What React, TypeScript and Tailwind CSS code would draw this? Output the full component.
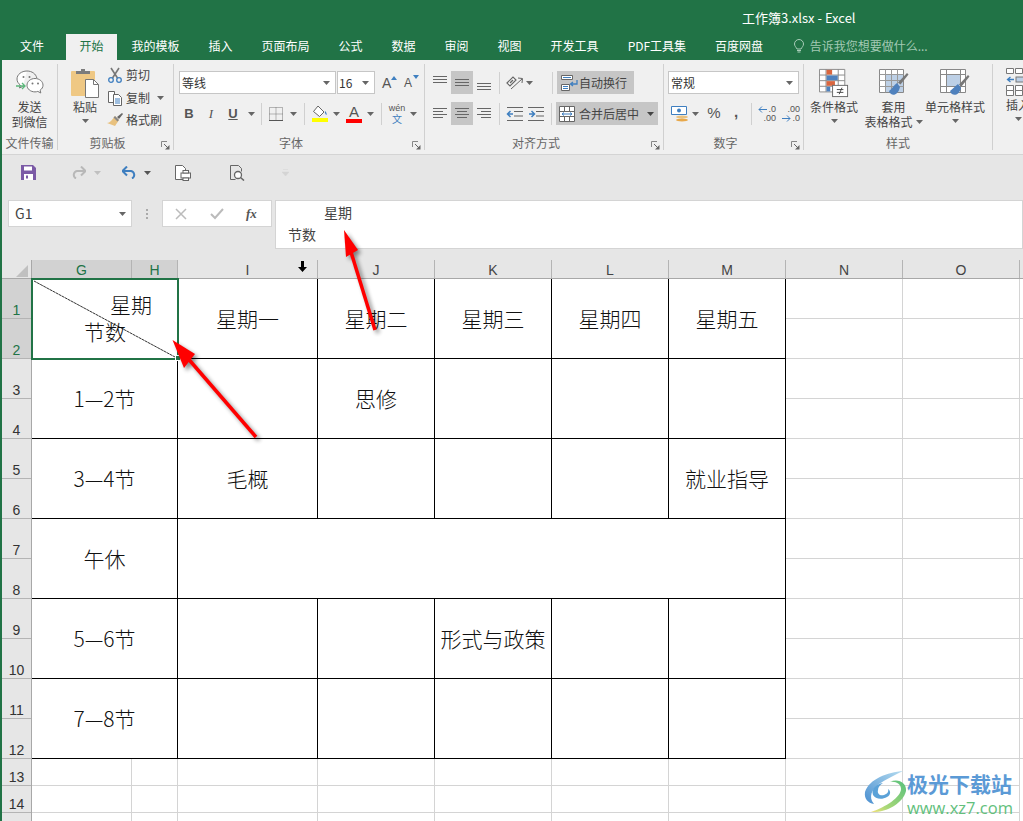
import React from "react";

const Caret = ({ c = "#666" }: { c?: string }) => (
  <svg width="7" height="4" viewBox="0 0 7 4" className="shrink-0"><path d="M0 0h7L3.5 4z" fill={c} /></svg>
);

const Sep = ({ cls }: { cls: string }) => <div className={"w-px h-[22px] bg-[#d0d0d0] shrink-0 " + cls} />;

function Lines({ ys, align }: { ys: number[]; align: "l" | "c" | "r" | "f" }) {
  const rows = ys.map((y, i) => {
    const short = i % 2 === 1 && align !== "f";
    const w = short ? 10 : 14;
    const x = align === "l" ? 1 : align === "r" ? 15 - w : 8 - w / 2;
    return <rect key={i} x={x} y={y} width={w} height="1" fill="#666" />;
  });
  return <svg width="16" height="16" viewBox="0 0 16 16">{rows}</svg>;
}

const AlignCell = ({ ys, align, on }: { ys: number[]; align: "l" | "c" | "r" | "f"; on?: boolean }) => (
  <div className={"w-[22px] h-[23px] flex items-center justify-center " + (on ? "bg-[#c6c6c6]" : "")}>
    <Lines ys={ys} align={align} />
  </div>
);

const Launcher = () => (
  <svg width="9" height="9" viewBox="0 0 9 9" className="absolute right-[3px] bottom-[0px]">
    <path d="M0.5 6V0.5H6" fill="none" stroke="#888" />
    <path d="M3 3l4 4" stroke="#666" />
    <path d="M8.5 4v4.5H4z" fill="#666" />
  </svg>
);

function Group({ w, label, launcher, children }: { w: string; label: string; launcher?: boolean; children: React.ReactNode }) {
  return (
    <div className={"relative flex flex-col h-[86px] mt-[4px] border-r border-[#d0d0d0] shrink-0 " + w}>
      <div className="h-[71px] flex">{children}</div>
      <div className={"h-[15px] text-[12px] leading-[16px] text-center text-[#666] " + (launcher ? "pr-[16px]" : "")}>{label}</div>
      {launcher && <Launcher />}
    </div>
  );
}

const WeChat = () => (
  <svg width="30" height="28" viewBox="0 0 30 28">
    <path d="M12 2C6.500 2 2 5.500 2 10c0 2.500 1.300 4.500 3.300 6L4.500 19l3.200-1.500" fill="#fff" stroke="#777" />
    <path d="M12 2c5 0 9 3 9.800 7" fill="none" stroke="#777" />
    <circle cx="8.500" cy="8" r="1" fill="#777" /><circle cx="14.500" cy="8" r="1" fill="#777" />
    <path d="M20 9.500c-4.500 0-8 3-8 6.700s3.500 6.700 8 6.700c1 0 2-.2 2.800-.5l3 1.600-.7-2.800c1.800-1.200 2.900-3 2.900-5 0-3.700-3.500-6.700-8-6.700z" fill="#fff" stroke="#777" />
    <circle cx="17.500" cy="14.500" r="1" fill="#777" /><circle cx="23" cy="14.500" r="1" fill="#777" />
    <path d="M1 17h9M7 14l3 3-3 3" fill="none" stroke="#5bb77a" strokeWidth="1.300" />
  </svg>
);

const Paste = () => (
  <svg width="30" height="30" viewBox="0 0 30 30">
    <rect x="1" y="3" width="24" height="25" rx="1" fill="#efc884" />
    <path d="M6 6V3h5V1h4v2h5v3z" fill="#7c7c7c" />
    <path d="M15.500 11.500h8l5 5v13h-13z" fill="#fff" stroke="#777" />
    <path d="M23.500 11.500v5h5" fill="none" stroke="#777" />
  </svg>
);

const Scissors = () => (
  <svg width="16" height="16" viewBox="0 0 16 16">
    <path d="M4 1l6.500 10M12 1L5.500 11" stroke="#777" strokeWidth="1.600" />
    <circle cx="4" cy="13" r="2.300" fill="none" stroke="#3f7fc0" strokeWidth="1.300" />
    <circle cx="12" cy="13" r="2.300" fill="none" stroke="#3f7fc0" strokeWidth="1.300" />
  </svg>
);

const CopyIcon = () => (
  <svg width="16" height="16" viewBox="0 0 16 16">
    <path d="M1.500 1.500h6v11h-6z" fill="#fff" stroke="#666" />
    <path d="M6.500 4.500h5l3 3v8h-8z" fill="#fff" stroke="#666" />
    <path d="M8 9h5M8 11h5M8 13h5" stroke="#3f7fc0" />
  </svg>
);

const Brush = () => (
  <svg width="18" height="16" viewBox="0 0 18 16">
    <path d="M11 5l2 2 4-5-1-1z" fill="#666" />
    <path d="M9 4l4 4-4 6-8-3c3 0 5-3 8-7z" fill="#e8c17f" />
    <path d="M9 4l4 4-1.500 1.500L7.500 5.500z" fill="#888" />
  </svg>
);

const FillIcon = () => (
  <svg width="18" height="18" viewBox="0 0 18 18">
    <path d="M7 1l6 6-4.500 4.500-6-5z" fill="#fff" stroke="#666" />
    <path d="M14 6c1.500 1.500 2 3 1.500 4-1-.5-2-2-1.500-4z" fill="#3f7fc0" />
    <rect x="1" y="13" width="16" height="4" fill="#ffff00" />
  </svg>
);

const BorderIcon = () => (
  <svg width="14" height="14" viewBox="0 0 14 14">
    <path d="M.5.500h13v13H.5zM7 .5v13M.5 7h13" fill="none" stroke="#777" strokeDasharray="1 1" />
    <path d="M0 13.500h14" stroke="#555" />
  </svg>
);

const WrapIcon = () => (
  <svg width="18" height="18" viewBox="0 0 18 18">
    <path d="M1.500 1.500h11v4h-11zM1.500 10.500h8v6h-8z" fill="#fff" stroke="#666" />
    <path d="M3 3.500h8M3 12.500h5M3 14.500h5" stroke="#3f7fc0" />
    <path d="M17 6v4h-6M13 8l-2.500 2 2.500 2" fill="none" stroke="#3f7fc0" strokeWidth="1.300" />
  </svg>
);

const MergeIcon = () => (
  <svg width="16" height="16" viewBox="0 0 16 16">
    <path d="M.5.500h15v15H.5zM.5 5.500h15M.5 10.500h15M5.500.5v5M10.500.5v5M5.500 10.500v5M10.500 10.500v5" fill="#fff" stroke="#666" />
    <path d="M3 8h10" stroke="#3f7fc0" />
    <path d="M5 6.500L3 8l2 1.500M11 6.500L13 8l-2 1.500" fill="none" stroke="#3f7fc0" />
  </svg>
);

const Orient = () => (
  <svg width="20" height="18" viewBox="0 0 20 18">
    <path d="M2 9l6-6 3 3-6 6z" fill="#fff" stroke="#666" strokeWidth="1.200" />
    <path d="M5 9l3-3" stroke="#666" strokeWidth="1.500" />
    <path d="M6 15L17 5M13 4l4.500.5L17 9" fill="none" stroke="#666" />
  </svg>
);

const Indent = ({ dir }: { dir: "l" | "r" }) => (
  <svg width="17" height="14" viewBox="0 0 17 14">
    {dir === "l" ? (
      <>
        <path d="M1 .5h16M8 4.500h9M8 9h9M1 13.500h16" stroke="#666" />
        <path d="M7 7H2M4.500 4L1.500 7l3 3" fill="none" stroke="#3f7fc0" strokeWidth="1.500" />
      </>
    ) : (
      <>
        <path d="M0 .5h16M8 4.500h8M8 9h8M0 13.500h16" stroke="#666" />
        <path d="M1 7h5M3.500 4l3 3-3 3" fill="none" stroke="#3f7fc0" strokeWidth="1.500" />
      </>
    )}
  </svg>
);

const Accounting = () => (
  <svg width="18" height="18" viewBox="0 0 18 18">
    <path d="M.5 1.500h15v8H.5z" fill="#fff" stroke="#3f7fc0" />
    <circle cx="8" cy="5.500" r="2" fill="#3f7fc0" />
    <ellipse cx="11" cy="12" rx="6" ry="1.500" fill="#e8c17f" />
    <ellipse cx="11" cy="15" rx="6" ry="1.500" fill="#e8a84a" />
  </svg>
);

const Decimal = ({ inc }: { inc: boolean }) => (
  <div className="relative w-[18px] h-[18px] text-[9px] leading-[9px] text-[#555] text-right font-['Liberation_Sans',sans-serif]">
    <div>{inc ? ".0" : ".00"}</div>
    <div>{inc ? ".00" : ".0"}</div>
    <svg width="9" height="7" viewBox="0 0 9 7" className={"absolute left-0 " + (inc ? "top-[1px]" : "top-[10px]")}>
      {inc ? <path d="M9 3.500H1M4 .5l-3 3 3 3" fill="none" stroke="#3f7fc0" /> : <path d="M0 3.500h8M5 .5l3 3-3 3" fill="none" stroke="#3f7fc0" />}
    </svg>
  </div>
);

const CondFormat = () => (
  <svg width="30" height="30" viewBox="0 0 32 30">
    <path d="M.5.500h27v24H.5zM7.500.5v24M20.500.5v24M.5 6.500h27M.5 12.500h27M.5 18.500h27" fill="#fff" stroke="#888" />
    <rect x="8" y="1" width="6" height="5" fill="#d9663f" />
    <rect x="8" y="7" width="12" height="5" fill="#4f81bd" />
    <rect x="8" y="13" width="9" height="5" fill="#d9663f" />
    <rect x="8" y="19" width="4" height="5" fill="#4f81bd" />
    <rect x="14.500" y="17.500" width="16" height="12" fill="#fff" stroke="#666" />
    <path d="M19 22h7M19 25h7M24.500 20l-3 7" stroke="#444" fill="none" />
  </svg>
);

const TableFmt = () => (
  <svg width="30" height="30" viewBox="0 0 30 30">
    <path d="M.5 1.500h24v23H.5z" fill="#fff" stroke="#888" />
    <rect x="6" y="6" width="18" height="18" fill="#bdd0e6" />
    <path d="M.5 6.500h24M.5 12.500h24M.5 18.500h24M6.500 1.500v23M12.500 1.500v23M18.500 1.500v23" stroke="#999" fill="none" />
    <path d="M28 5l1.500 1.500-8 10-2.500-2z" fill="#777" />
    <path d="M18 15c-3 2-5 6-8 8 2 6 9 5 11-4z" fill="#4f81bd" />
  </svg>
);

const CellStyle = () => (
  <svg width="30" height="30" viewBox="0 0 30 30">
    <path d="M.5 1.500h25v23H.5zM.5 6.500h25M.5 18.500h25M6.500 1.500v23M20.500 1.500v23" fill="#fff" stroke="#888" />
    <rect x="7" y="7" width="13" height="11" fill="#bdd0e6" />
    <path d="M28 7l1.500 1.500-8 10-2.500-2z" fill="#777" />
    <path d="M18 16c-3 2-5 5-8 7 2 6 9 5 11-3z" fill="#4f81bd" />
  </svg>
);

const InsertIcon = () => (
  <svg width="20" height="28" viewBox="0 0 20 28">
    <path d="M.5.500h7v5h-7zM9.500.5h7v5h-7zM.5 17.500h7v5h-7zM9.500 17.500h7v5h-7zM.5 22.500h7v5h-7zM9.500 22.500h7v5h-7z" fill="#fff" stroke="#777" />
    <rect x="10" y="9" width="10" height="5" fill="#bdd0e6" stroke="#777" />
    <path d="M8 11.500H2M4.500 9l-3 2.500 3 2.500" fill="none" stroke="#3f7fc0" strokeWidth="1.300" />
  </svg>
);

function BigButton({ w, icon, lines, caret, inlineCaret }: { w: string; icon: React.ReactNode; lines: string[]; caret?: boolean; inlineCaret?: boolean }) {
  return (
    <div className={"flex flex-col items-center shrink-0 pt-[4px] " + w}>
      <div className="h-[30px] flex items-center justify-center">{icon}</div>
      <div className="mt-[1px] text-[12px] leading-[15px] text-[#444] text-center whitespace-nowrap">
        {lines.map((l, i) => (
          <div key={l} className="flex items-center justify-center gap-[3px]">
            {l}
            {inlineCaret && i === lines.length - 1 && <Caret />}
          </div>
        ))}
      </div>
      {caret && <div className="mt-[5px]"><Caret /></div>}
    </div>
  );
}

function SmallBtn({ icon, text, caret }: { icon: React.ReactNode; text: string; caret?: boolean }) {
  return (
    <div className="h-[22.500px] flex items-center text-[12px] text-[#444] whitespace-nowrap">
      <div className="w-[18px] flex justify-center">{icon}</div>
      <span className="ml-[2px]">{text}</span>
      {caret && <span className="ml-[7px]"><Caret /></span>}
    </div>
  );
}

function Tabs() {
  const tabs = ["我的模板", "插入", "页面布局", "公式", "数据", "审阅", "视图", "开发工具", "PDF工具集", "百度网盘"];
  return (
    <div className="h-[26px] flex items-start text-[12px] text-white bg-[#217346] pl-[6px]">
      <div className="w-[52px] h-[26px] leading-[23px] text-center">文件</div>
      <div className="ml-[8px] w-[51px] h-[26px] leading-[23px] text-center bg-[#f0f0f0] text-[#217346]">开始</div>
      {tabs.map((t) => (
        <div key={t} className="px-[14.500px] h-[26px] leading-[23px] whitespace-nowrap">{t}</div>
      ))}
      <svg width="12" height="14" viewBox="0 0 12 14" className="ml-[15px] mt-[5px]">
        <path d="M4 10C3 8 1.500 7 1.500 5a4.500 4.500 0 0 1 9 0c0 2-1.500 3-2.500 5z" fill="none" stroke="#a9cdb9" />
        <path d="M4 11.500h4M4.500 13h3" stroke="#a9cdb9" />
      </svg>
      <div className="ml-[5px] leading-[23px] text-[#a3c9b4] whitespace-nowrap">告诉我您想要做什么...</div>
    </div>
  );
}

function Ribbon() {
  return (
    <div className="h-[95px] flex bg-[#f0f0f0] border-b border-[#d4d4d4] overflow-hidden">
      <Group w="w-[56px]" label="文件传输">
        <BigButton w="w-[55px]" icon={<WeChat />} lines={["发送", "到微信"]} />
      </Group>
      <Group w="w-[116px]" label="剪贴板" launcher>
        <div className="ml-[6px] w-[42px]">
          <BigButton w="w-[42px]" icon={<Paste />} lines={["粘贴"]} caret />
        </div>
        <div className="flex flex-col">
          <SmallBtn icon={<Scissors />} text="剪切" />
          <SmallBtn icon={<CopyIcon />} text="复制" caret />
          <SmallBtn icon={<Brush />} text="格式刷" />
        </div>
      </Group>
      <Group w="w-[251px]" label="字体" launcher>
        <div className="flex flex-col pt-[7px] pl-[5px]">
          <div className="flex items-center h-[23px]">
            <div className="w-[157px] h-[23px] bg-white border border-[#c6c6c6] flex items-center justify-between pl-[2px] pr-[5px] text-[12px] text-[#333]">
              等线<Caret />
            </div>
            <div className="ml-[1px] w-[38px] h-[23px] bg-white border border-[#c6c6c6] flex items-center justify-between pl-[1px] pr-[5px] text-[12px] text-[#333]">
              16<Caret />
            </div>
            <div className="ml-[7px] w-[16px] text-[14px] text-[#555] relative font-['Liberation_Sans',sans-serif] leading-none">
              A<svg width="6" height="4" viewBox="0 0 6 4" className="absolute top-[0px] left-[9px]"><path d="M0 4h6L3 0z" fill="#3f7fc0" /></svg>
            </div>
            <div className="ml-[6px] w-[16px] text-[12px] text-[#555] relative font-['Liberation_Sans',sans-serif] leading-none">
              A<svg width="6" height="4" viewBox="0 0 6 4" className="absolute top-[-2px] left-[9px]"><path d="M0 0h6L3 4z" fill="#3f7fc0" /></svg>
            </div>
          </div>
          <div className="flex items-center h-[23px] mt-[8px] -ml-[1px] text-[#555] font-['Liberation_Sans',sans-serif]">
            <div className="w-[22px] text-center text-[13px] font-bold">B</div>
            <div className="w-[22px] text-center text-[13px] italic font-['Liberation_Serif',serif]">I</div>
            <div className="w-[22px] text-center text-[13px] font-bold underline">U</div>
            <div className="w-[14px] flex justify-center"><Caret /></div>
            <Sep cls="ml-[3px]" />
            <div className="ml-[6px] w-[16px] flex justify-center"><BorderIcon /></div>
            <div className="w-[18px] flex justify-center"><Caret /></div>
            <Sep cls="ml-[2px]" />
            <div className="ml-[4px] w-[22px] flex justify-center"><FillIcon /></div>
            <div className="w-[10px] flex justify-center"><Caret /></div>
            <div className="ml-[2px] w-[22px] flex flex-col items-center leading-none">
              <span className="text-[15px] font-medium leading-[15px]">A</span>
              <span className="w-[16px] h-[4px] bg-[#ff0000]" />
            </div>
            <div className="w-[10px] flex justify-center"><Caret /></div>
            <Sep cls="ml-[6px]" />
            <div className="ml-[4px] w-[22px] flex flex-col items-center leading-none">
              <span className="text-[9px] leading-[9px] text-[#555]">wén</span>
              <span className="text-[10px] leading-[11px] text-[#3f7fc0] font-['Noto_Sans_CJK_SC',sans-serif]">文</span>
            </div>
            <div className="w-[10px] flex justify-center"><Caret /></div>
          </div>
        </div>
      </Group>
      <Group w="w-[239px]" label="对齐方式" launcher>
        <div className="flex flex-col pt-[7px] pl-[4px]">
          <div className="flex items-center h-[23px]">
            <AlignCell ys={[1, 4, 7]} align="f" />
            <AlignCell ys={[4, 7, 10]} align="f" on />
            <AlignCell ys={[8, 11, 14]} align="f" />
            <Sep cls="ml-[4px]" />
            <div className="ml-[5px] w-[20px]"><Orient /></div>
            <div className="ml-[1px]"><Caret /></div>
            <Sep cls="ml-[19px]" />
            <div className="ml-[4px] w-[77px] h-[23px] bg-[#c6c6c6] flex items-center text-[12px] text-[#444] pl-[3px]">
              <WrapIcon /><span className="ml-[1px] whitespace-nowrap">自动换行</span>
            </div>
          </div>
          <div className="flex items-center h-[23px] mt-[8px]">
            <AlignCell ys={[2, 5, 8, 11]} align="l" />
            <AlignCell ys={[2, 5, 8, 11]} align="c" on />
            <AlignCell ys={[2, 5, 8, 11]} align="r" />
            <Sep cls="ml-[4px]" />
            <div className="ml-[6px]"><Indent dir="l" /></div>
            <div className="ml-[5px]"><Indent dir="r" /></div>
            <Sep cls="ml-[6px]" />
            <div className="ml-[4px] w-[102px] h-[23px] bg-[#c6c6c6] flex items-center text-[12px] text-[#444] pl-[3px]">
              <MergeIcon /><span className="ml-[4px] whitespace-nowrap">合并后居中</span><span className="ml-[8px]"><Caret c="#444" /></span>
            </div>
          </div>
        </div>
      </Group>
      <Group w="w-[140px]" label="数字" launcher>
        <div className="flex flex-col pt-[7px] pl-[4px]">
          <div className="w-[131px] h-[23px] bg-white border border-[#c6c6c6] flex items-center justify-between pl-[2px] pr-[5px] text-[12px] text-[#333]">
            常规<Caret />
          </div>
          <div className="flex items-center h-[23px] mt-[8px] text-[#555]">
            <div className="ml-[3px]"><Accounting /></div>
            <div className="ml-[3px]"><Caret /></div>
            <div className="ml-[5px] w-[20px] text-[15px] text-center font-['Liberation_Sans',sans-serif]">%</div>
            <div className="ml-[3px] w-[18px] text-[15px] font-bold text-center font-['Liberation_Sans',sans-serif] -mt-[3px]">,</div>
            <Sep cls="ml-[6px]" />
            <div className="ml-[6px]"><Decimal inc /></div>
            <div className="ml-[6px]"><Decimal inc={false} /></div>
          </div>
        </div>
      </Group>
      <Group w="w-[189px]" label="样式">
        <BigButton w="w-[60px]" icon={<CondFormat />} lines={["条件格式"]} caret />
        <BigButton w="w-[59px]" icon={<TableFmt />} lines={["套用", "表格格式"]} inlineCaret />
        <BigButton w="w-[64px]" icon={<CellStyle />} lines={["单元格样式"]} caret />
      </Group>
      <div className="h-[86px] mt-[4px] w-[30px] shrink-0 flex flex-col pl-[13px] pt-[4px] text-[12px] text-[#444] whitespace-nowrap">
        <InsertIcon />
        <div className="mt-[1px] leading-[15px]">插入</div>
        <div className="mt-[5px] ml-[9px]"><Caret /></div>
      </div>
    </div>
  );
}

function Toolbar() {
  return (
    <div className="h-[35px] bg-[#e6e6e6] flex items-center pl-[19px]">
      <svg width="15" height="15" viewBox="0 0 15 15">
        <path d="M0 0h12l3 3v12H0z" fill="#7b5aa6" />
        <rect x="3" y="1.500" width="8" height="4" fill="#fff" />
        <rect x="3" y="9" width="9" height="6" fill="#fff" />
        <rect x="5" y="10.500" width="2" height="3" fill="#7b5aa6" />
      </svg>
      <svg width="15" height="13" viewBox="0 0 15 13" className="ml-[35px]">
        <path d="M14 5H6a4 4 0 0 0-1 7.500" fill="none" stroke="#b8b8b8" strokeWidth="2" />
        <path d="M10 .5L14.500 5 10 9.500" fill="none" stroke="#b8b8b8" strokeWidth="2" />
      </svg>
      <div className="ml-[8px]"><Caret c="#c0c0c0" /></div>
      <svg width="15" height="13" viewBox="0 0 15 13" className="ml-[21px]">
        <path d="M1 5h8a4 4 0 0 1 1 7.500" fill="none" stroke="#3f7fc0" strokeWidth="2" />
        <path d="M5 .5L.5 5 5 9.500" fill="none" stroke="#3f7fc0" strokeWidth="2" />
      </svg>
      <div className="ml-[7px]"><Caret c="#555" /></div>
      <svg width="16" height="16" viewBox="0 0 16 16" className="ml-[24px]">
        <path d="M.5.500h7l3 3v11h-10z" fill="#fff" stroke="#666" />
        <rect x="6" y="8" width="9.500" height="5" fill="#fff" stroke="#666" />
        <rect x="8" y="5.500" width="5.500" height="2.500" fill="#fff" stroke="#666" />
        <rect x="8" y="13" width="5.500" height="2.500" fill="#fff" stroke="#666" />
      </svg>
      <svg width="15" height="16" viewBox="0 0 15 16" className="ml-[39px]">
        <path d="M.5.500h8l3 3v3M.5.500v14h5" fill="none" stroke="#666" />
        <circle cx="8" cy="10" r="3.500" fill="#fff" stroke="#666" strokeWidth="1.300" />
        <path d="M10.500 12.500l3.500 3" stroke="#666" strokeWidth="1.600" />
      </svg>
      <svg width="7" height="7" viewBox="0 0 7 7" className="ml-[37px]">
        <path d="M1 .5h5M0 3h7l-3.500 4z" fill="#d4d4d4" stroke="#d4d4d4" strokeWidth=".5" />
      </svg>
    </div>
  );
}

function FormulaBar() {
  return (
    <div className="h-[70px] bg-[#e6e6e6] flex items-start pt-[10px] pl-[6px]">
      <div className="w-[124px] h-[27px] bg-white border border-[#d4d4d4] flex items-center justify-between pl-[6px] pr-[5px] text-[14px] text-[#444]">
        G1<Caret />
      </div>
      <div className="w-[30px] h-[27px] flex flex-col items-center justify-center gap-[2px]">
        <span className="w-[2px] h-[2px] bg-[#aaa]" /><span className="w-[2px] h-[2px] bg-[#aaa]" /><span className="w-[2px] h-[2px] bg-[#aaa]" />
      </div>
      <div className="w-[110px] h-[27px] bg-white border border-[#d4d4d4] flex items-center">
        <svg width="12" height="12" viewBox="0 0 12 12" className="ml-[12px]"><path d="M1 1l10 10M11 1L1 11" stroke="#bbb" strokeWidth="1.500" /></svg>
        <svg width="14" height="12" viewBox="0 0 14 12" className="ml-[23px]"><path d="M1 6l4 4 8-9" fill="none" stroke="#bbb" strokeWidth="2" /></svg>
        <span className="ml-[22px] text-[13px] italic font-bold text-[#555] font-['Liberation_Serif',serif]">fx</span>
      </div>
      <div className="ml-[3px] flex-1 h-[49px] bg-white border border-[#d4d4d4] text-[14px] leading-[22px] text-[#444]">
        <div className="pl-[48px]">星期</div>
        <div className="pl-[12px]">节数</div>
      </div>
    </div>
  );
}

const colH = [
  ["G", "w-[100px]", true], ["H", "w-[46px]", true], ["I", "w-[140px]", false], ["J", "w-[117px]", false], ["K", "w-[117px]", false],
  ["L", "w-[117px]", false], ["M", "w-[117px]", false], ["N", "w-[117px]", false], ["O", "w-[117px]", false],
] as const;

function Cell({ w, t }: { w: string; t?: string }) {
  return (
    <div className={"shrink-0 h-[80px] border-r border-b border-black flex items-center justify-center whitespace-nowrap " + w}>{t}</div>
  );
}

const Gap = () => (
  <>
    {[0, 1, 2].map((i) => (
      <div key={i} className="w-[117px] shrink-0 flex flex-col">
        <div className="h-[40px] border-r border-b border-[#d4d4d4]" />
        <div className="h-[40px] border-r border-b border-[#d4d4d4]" />
      </div>
    ))}
  </>
);

function TableRow({ cells }: { cells: (string | undefined)[] }) {
  return (
    <div className="flex">
      <Cell w="w-[146px]" t={cells[0]} />
      <Cell w="w-[140px]" t={cells[1]} />
      <Cell w="w-[117px]" t={cells[2]} />
      <Cell w="w-[117px]" t={cells[3]} />
      <Cell w="w-[117px]" t={cells[4]} />
      <Cell w="w-[117px]" t={cells[5]} />
      <Gap />
    </div>
  );
}

function Sheet() {
  const rowN = [1, 2, 3, 4, 5, 6, 7, 8, 9, 10, 11, 12];
  return (
    <div className="flex-1 flex bg-white overflow-hidden font-['Liberation_Sans','Noto_Sans_CJK_SC',sans-serif]">
      <div className="w-[30px] shrink-0 flex flex-col bg-[#e6e6e6] border-r border-[#a8a8a8]">
        <div className="h-[19px] shrink-0 border-b border-[#a8a8a8] relative">
          <svg width="12" height="12" viewBox="0 0 12 12" className="absolute right-[3px] bottom-[1px]"><path d="M12 0v12H0z" fill="#c0c0c0" /></svg>
        </div>
        {rowN.map((n) => (
          <div key={n} className={"h-[40px] shrink-0 border-b border-[#b4b4b4] flex items-end justify-center text-[14px] leading-[15px] " + (n <= 2 ? "bg-[#d2d2d2] text-[#217346]" : "text-[#333]")}>{n}</div>
        ))}
        {[13, 14].map((n) => (
          <div key={n} className="h-[27px] shrink-0 border-b border-[#b4b4b4] flex items-end justify-center text-[14px] leading-[15px] text-[#333]">{n}</div>
        ))}
      </div>
      <div className="flex-1 min-w-0 flex flex-col">
        <div className="h-[19px] shrink-0 flex border-b border-[#a8a8a8]">
          {colH.map(([c, w, on]) => (
            <div key={c} className={"shrink-0 h-[18px] pt-[2px] border-r border-[#b4b4b4] flex items-center justify-center text-[14px] leading-none " + w + (on ? " bg-[#d2d2d2] text-[#217346]" : " bg-[#e6e6e6] text-[#444]")}>{c}</div>
          ))}
          <div className="flex-1 bg-[#e6e6e6]" />
        </div>
        <div className="text-[21px] text-[#111] font-['Noto_Sans_CJK_SC',sans-serif] font-light">
          <TableRow cells={[undefined, "星期一", "星期二", "星期三", "星期四", "星期五"]} />
          <TableRow cells={["1—2节", undefined, "思修"]} />
          <TableRow cells={["3—4节", "毛概", undefined, undefined, undefined, "就业指导"]} />
          <div className="flex">
            <Cell w="w-[146px]" t="午休" />
            <Cell w="w-[608px]" />
            <Gap />
          </div>
          <TableRow cells={["5—6节", undefined, undefined, "形式与政策"]} />
          <TableRow cells={["7—8节"]} />
        </div>
        {[0, 1, 2].map((r) => (
          <div key={r} className="flex shrink-0">
            {colH.map(([c, w]) => (
              <div key={c} className={"shrink-0 h-[27px] border-r border-b border-[#d4d4d4] " + w} />
            ))}
          </div>
        ))}
      </div>
    </div>
  );
}

function Overlays() {
  return (
    <>
      <div className="absolute left-[31px] top-[278px] w-[148px] h-[82px] border-2 border-[#217346] text-[21px] text-[#111] font-['Noto_Sans_CJK_SC',sans-serif] font-light">
        <div className="absolute left-[77px] top-[9px] leading-[30px] whitespace-nowrap">星期</div>
        <div className="absolute left-[51px] top-[36px] leading-[30px] whitespace-nowrap">节数</div>
        <svg width="144" height="78" viewBox="0 0 144 78" className="absolute left-0 top-0">
          <path d="M1 1L142 77" stroke="#000" strokeWidth=".8" strokeDasharray="3 .5" />
        </svg>
      </div>
      <div className="absolute left-[175px] top-[355px] w-[6px] h-[6px] bg-[#217346] border border-white" />
      <svg width="9" height="11" viewBox="0 0 9 11" className="absolute left-[298px] top-[261px]">
        <path d="M3 0h3v6h3L4.500 11 0 6h3z" fill="#000" />
      </svg>
      <svg width="1023" height="821" viewBox="0 0 1023 821" className="absolute left-0 top-0 pointer-events-none">
        <defs>
          <filter id="sh" x="-30%" y="-30%" width="160%" height="160%">
            <feGaussianBlur stdDeviation="2.200" />
          </filter>
        </defs>
        <g filter="url(#sh)" opacity=".45" transform="translate(3 3)">
          <path d="M256 437L185 355" stroke="#000" strokeWidth="3.500" />
          <path d="M172.500 340L195 354L184 368z" fill="#000" />
          <path d="M375 330L351 252" stroke="#000" strokeWidth="3.500" />
          <path d="M344 230L358 250L346 257z" fill="#000" />
        </g>
        <path d="M256 437L185 355" stroke="#ff0000" strokeWidth="3.500" />
        <path d="M172.500 340L195 354L184 368z" fill="#ff0000" />
        <path d="M375 330L351 252" stroke="#ff0000" strokeWidth="3.500" />
        <path d="M344 230L358 250L346 257z" fill="#ff0000" />
      </svg>
    </>
  );
}

function Watermark() {
  return (
    <div className="absolute left-[863px] top-[769px] flex items-start">
      <svg width="44" height="44" viewBox="0 0 44 44" className="shrink-0">
        <defs>
          <linearGradient id="wb" x1="0" y1="1" x2="1" y2="0">
            <stop offset="0" stopColor="#4a8fd0" /><stop offset="1" stopColor="#b5dcf0" />
          </linearGradient>
          <linearGradient id="wg" x1="1" y1="0" x2="0" y2="1">
            <stop offset="0" stopColor="#58c07c" /><stop offset=".7" stopColor="#a8d878" /><stop offset="1" stopColor="#f5e27a" />
          </linearGradient>
        </defs>
        <path d="M40 2C25 3 6 10 2 23c-1 7 3 11 9 12C5 28 9 20 16 15 23 10 32 6 40 2z" fill="url(#wb)" />
        <path d="M20 14c-7 1-12 6-10 12 2 4 9 5 14 2 4-2 4-6 1-8 1 3-1 5-4 6-4 1-7-1-6-5 0-3 2-5 5-7z" fill="#5ba2d8" />
        <path d="M27 13c6-1 11 2 11 7 0 8-15 18-30 23 14 1 32-8 35-21 1-8-8-13-16-9z" fill="url(#wg)" />
      </svg>
      <div className="flex flex-col">
        <div className="text-[21px] leading-[26px] font-bold text-[#5b9ad6] whitespace-nowrap mt-[1px]">极光下载站</div>
        <div className="text-[16.500px] leading-[22px] mt-[1px] text-[#62c07c] whitespace-nowrap font-['Open_Sans',sans-serif]">www.xz7.com</div>
      </div>
    </div>
  );
}

export default function App() {
  return (
    <div className="relative w-[1023px] h-[821px] overflow-hidden bg-[#217346] font-['Noto_Sans_CJK_SC',sans-serif]">
      <div className="h-[34px] bg-[#217346] text-white text-[13px] leading-[36px] pl-[742px] whitespace-nowrap">工作簿3.xlsx - Excel</div>
      <Tabs />
      <div className="ml-[2px] h-[761px] flex flex-col bg-[#e6e6e6]">
        <Ribbon />
        <Toolbar />
        <FormulaBar />
        <Sheet />
      </div>
      <Overlays />
      <Watermark />
    </div>
  );
}
